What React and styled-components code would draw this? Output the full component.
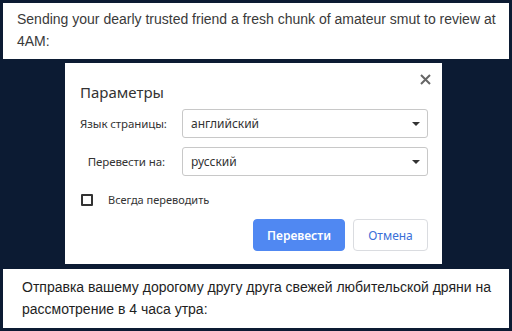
import React from 'react';
import styled, { createGlobalStyle } from 'styled-components';

const GlobalStyle = createGlobalStyle`
    html, body {
        margin: 0;
        padding: 0;
        background: #0c1b33;
    }
`;

const Page = styled.div`
    display: flex;
    flex-direction: column;
    padding: 3px;
    width: 506px;
    height: 325px;
`;

const Caption = styled.div`
    background: #fff;
    box-sizing: border-box;
    height: ${({ $height }) => $height}px;
    padding: ${({ $top }) => $top}px 10px 0 ${({ $left }) => $left}px;
    font-family: "Liberation Sans", Arial, sans-serif;
    font-size: 14px;
    line-height: 22px;
    color: ${({ $color }) => $color};
`;

const Dialog = styled.div`
    position: relative;
    box-sizing: border-box;
    background: #fff;
    width: 377px;
    height: 201px;
    margin: 4px 0 5px 62px;
    padding: 19px 14px 0 15px;
    font-family: "Segoe UI", "Noto Sans", sans-serif;
    color: #333;
`;

const CloseButton = styled.button`
    position: absolute;
    top: 8px;
    right: 9px;
    width: 16px;
    height: 16px;
    padding: 0;
    border: 0;
    background: transparent;
    display: flex;
    align-items: center;
    justify-content: center;
    color: #666;
`;

const Title = styled.div`
    font-size: 15px;
    line-height: 20px;
    color: #333;
`;

const Form = styled.div`
    display: grid;
    grid-template-columns: 85px 246px;
    column-gap: 17px;
    row-gap: 9px;
    align-items: center;
    margin-top: 7px;
`;

const Label = styled.div`
    text-align: right;
    white-space: nowrap;
    font-size: 11.5px;
    letter-spacing: -0.1px;
    color: #333;
`;

const Select = styled.div`
    box-sizing: border-box;
    height: 29px;
    border: 1px solid #c8c8c8;
    border-radius: 3px;
    display: flex;
    align-items: center;
    justify-content: space-between;
    padding: 0 7px 0 8px;
    font-size: 12px;
    color: #333;
`;

const Caret = styled.span`
    width: 0;
    height: 0;
    border-left: 4px solid transparent;
    border-right: 4px solid transparent;
    border-top: 4px solid #333;
`;

const CheckRow = styled.label`
    display: flex;
    align-items: center;
    gap: 15px;
    margin: 16px 0 0 1px;
    font-size: 11px;
    color: #333;
`;

const Box = styled.span`
    box-sizing: border-box;
    width: 12px;
    height: 12px;
    border: 2px solid #333;
    border-radius: 1px;
`;

const Actions = styled.div`
    display: flex;
    justify-content: flex-end;
    gap: 8px;
    margin-top: 12px;
`;

const Button = styled.button`
    box-sizing: border-box;
    height: 32px;
    width: ${({ $width }) => $width}px;
    border-radius: 4px;
    font-family: inherit;
    font-size: 12px;
    font-weight: ${({ $primary }) => ($primary ? 600 : 400)};
    border: 1px solid ${({ $primary }) => ($primary ? '#5088f2' : '#dadce0')};
    background: ${({ $primary }) => ($primary ? '#5088f2' : '#fff')};
    color: ${({ $primary }) => ($primary ? '#fff' : '#3b6fd8')};
`;

export default function App() {
    return (
        <>
            <GlobalStyle />
            <Page>
                <Caption $height={56} $top={5} $left={14} $color="#3a3a3a">
                    Sending your dearly trusted friend a fresh chunk of amateur smut to review at 4AM:
                </Caption>
                <Dialog>
                    <CloseButton aria-label="close">
                        <svg width="11" height="11" viewBox="0 0 11 11">
                            <path d="M1 1L10 10M10 1L1 10" stroke="currentColor" strokeWidth="2" />
                        </svg>
                    </CloseButton>
                    <Title>Параметры</Title>
                    <Form>
                        <Label>Язык страницы:</Label>
                        <Select>
                            английский
                            <Caret />
                        </Select>
                        <Label>Перевести на:</Label>
                        <Select>
                            русский
                            <Caret />
                        </Select>
                    </Form>
                    <CheckRow>
                        <Box />
                        Всегда переводить
                    </CheckRow>
                    <Actions>
                        <Button $primary $width={92}>Перевести</Button>
                        <Button $width={75}>Отмена</Button>
                    </Actions>
                </Dialog>
                <Caption $height={59} $top={7} $left={19} $color="#1e1e1e">
                    Отправка вашему дорогому другу друга свежей любительской дряни на рассмотрение в 4 часа утра:
                </Caption>
            </Page>
        </>
    );
}
